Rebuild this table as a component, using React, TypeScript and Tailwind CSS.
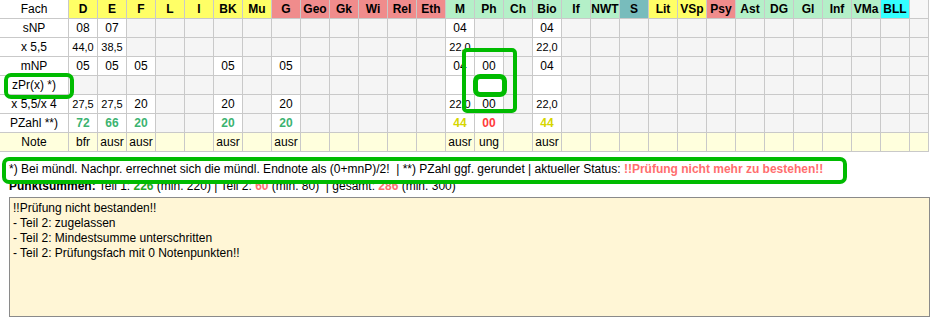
import React from "react";

type Tone = "y" | "r" | "g" | "t" | "c";

const cols: [string, Tone][] = [
  ["D", "y"], ["E", "y"], ["F", "y"], ["L", "y"], ["I", "y"], ["BK", "y"], ["Mu", "y"],
  ["G", "r"], ["Geo", "r"], ["Gk", "r"], ["Wi", "r"], ["Rel", "r"], ["Eth", "r"],
  ["M", "g"], ["Ph", "g"], ["Ch", "g"], ["Bio", "g"], ["If", "g"], ["NWT", "g"],
  ["S", "t"], ["Lit", "y"], ["VSp", "y"], ["Psy", "r"], ["Ast", "g"], ["DG", "g"],
  ["Gl", "g"], ["Inf", "g"], ["VMa", "g"], ["BLL", "c"],
];

const toneClass: Record<Tone, string> = {
  y: "bg-[#ffff66]",
  r: "bg-[#f08c8c]",
  g: "bg-[#b4f0c8]",
  t: "bg-[#78bcbc]",
  c: "bg-[#33ffff]",
};

type Cell = { v: string; white?: boolean; cls?: string };

const idx = (n: string) => cols.findIndex((c) => c[0] === n);

function makeRow(vals: Record<string, Cell>): (Cell | null)[] {
  const arr: (Cell | null)[] = cols.map(() => null);
  Object.entries(vals).forEach(([k, c]) => {
    arr[idx(k)] = c;
  });
  return arr;
}

const small = "text-[11px]";
const green = "font-bold text-[#3cb371]";
const yellow = "font-bold text-[#d6d600]";
const red = "font-bold text-[#ff3b3b]";

const rows: { label: string; note?: boolean; cells: (Cell | null)[] }[] = [
  {
    label: "sNP",
    cells: makeRow({
      D: { v: "08", white: true },
      E: { v: "07", white: true },
      M: { v: "04", white: true },
      Bio: { v: "04", white: true },
    }),
  },
  {
    label: "x 5,5",
    cells: makeRow({
      D: { v: "44,0", white: true, cls: small },
      E: { v: "38,5", white: true, cls: small },
      M: { v: "22,0", white: true, cls: small },
      Bio: { v: "22,0", white: true, cls: small },
    }),
  },
  {
    label: "mNP",
    cells: makeRow({
      D: { v: "05", white: true },
      E: { v: "05", white: true },
      F: { v: "05", white: true },
      BK: { v: "05", white: true },
      G: { v: "05", white: true },
      M: { v: "04", white: true },
      Ph: { v: "00", white: true },
      Bio: { v: "04", white: true },
    }),
  },
  {
    label: "zPr(x) *)",
    cells: makeRow({
      M: { v: "", white: true },
      Ph: { v: "", white: true },
      Bio: { v: "", white: true },
    }),
  },
  {
    label: "x 5,5/x 4",
    cells: makeRow({
      D: { v: "27,5", white: true, cls: small },
      E: { v: "27,5", white: true, cls: small },
      F: { v: "20", white: true },
      BK: { v: "20", white: true },
      G: { v: "20", white: true },
      M: { v: "22,0", white: true, cls: small },
      Ph: { v: "00", white: true },
      Bio: { v: "22,0", white: true, cls: small },
    }),
  },
  {
    label: "PZahl **)",
    cells: makeRow({
      D: { v: "72", white: true, cls: green },
      E: { v: "66", white: true, cls: green },
      F: { v: "20", white: true, cls: green },
      BK: { v: "20", white: true, cls: green },
      G: { v: "20", white: true, cls: green },
      M: { v: "44", white: true, cls: yellow },
      Ph: { v: "00", white: true, cls: red },
      Bio: { v: "44", white: true, cls: yellow },
    }),
  },
  {
    label: "Note",
    note: true,
    cells: makeRow({
      D: { v: "bfr" },
      E: { v: "ausr" },
      F: { v: "ausr" },
      BK: { v: "ausr" },
      G: { v: "ausr" },
      M: { v: "ausr" },
      Ph: { v: "ung" },
      Bio: { v: "ausr" },
    }),
  },
];

const cellBase = "h-[18px] flex items-center justify-center leading-none whitespace-nowrap";

export default function App() {
  return (
    <div className="relative w-[930px] h-[318px] overflow-hidden bg-white text-black font-['Liberation_Sans',Arial,sans-serif]">
      {/* table */}
      <div className="w-[929px] grid grid-cols-[68px_repeat(29,28px)_18px] gap-px bg-[#c9c9c9] border-b border-r border-[#c9c9c9] text-[12px]">
        <div className={`${cellBase} bg-white`}>Fach</div>
        {cols.map(([n, t]) => (
          <div key={n} className={`${cellBase} ${toneClass[t]} font-bold`}>
            {n}
          </div>
        ))}
        <div className={`${cellBase} bg-[#f7f7f7]`} />
        {rows.map((r) => (
          <React.Fragment key={r.label}>
            <div className={`${cellBase} ${r.note ? "bg-[#ffffdd]" : "bg-white"}`}>{r.label}</div>
            {r.cells.map((c, i) => (
              <div
                key={i}
                className={`${cellBase} ${
                  r.note ? "bg-[#ffffdd]" : c && c.white ? "bg-white" : "bg-[#f5f5f5]"
                } ${c?.cls ?? ""}`}
              >
                {c?.v}
              </div>
            ))}
            <div className={`${cellBase} ${r.note ? "bg-[#ffffdd]" : "bg-[#f5f5f5]"}`} />
          </React.Fragment>
        ))}
      </div>

      {/* footnote */}
      <div className="mt-[9px] pl-[9px] h-[17px] leading-[17px] text-[12px] whitespace-nowrap">
        *) Bei mündl. Nachpr. errechnet sich die mündl. Endnote als (0+mnP)/2!&nbsp; | **) PZahl ggf. gerundet | aktueller Status:{" "}
        <span className="font-bold text-[#ff6e6e]">!!Prüfung nicht mehr zu bestehen!!</span>
      </div>

      {/* sums */}
      <div className="pl-[9px] h-[17px] leading-[17px] text-[12px] whitespace-nowrap">
        <span className="font-bold">Punktsummen:</span> Teil 1: <span className="font-bold text-[#22a622]">226</span> (min. 220) | Teil 2:{" "}
        <span className="font-bold text-[#ff7070]">60</span> (min. 80)&nbsp; | gesamt: <span className="font-bold text-[#ff7070]">286</span> (min. 300)
      </div>

      {/* message box */}
      <div className="mt-[2px] ml-[9px] w-[921px] h-[120px] border border-[#8a8a8a] bg-[#fff6d6] px-[3px] pt-[3px] text-[12px] leading-[15px]">
        <div>!!Prüfung nicht bestanden!!</div>
        <div>- Teil 2: zugelassen</div>
        <div>- Teil 2: Mindestsumme unterschritten</div>
        <div>- Teil 2: Prüfungsfach mit 0 Notenpunkten!!</div>
      </div>

      {/* annotation overlays */}
      <div className="absolute left-[4px] top-[73px] w-[70px] h-[26px] border-4 border-[#00bb00] rounded-[7px]" />
      <div className="absolute left-[462px] top-[48px] w-[55px] h-[65px] border-4 border-[#00bb00] rounded-[5px]" />
      <div className="absolute left-[473px] top-[74px] w-[34px] h-[23px] border-[5px] border-[#00bb00] rounded-[7px]" />
      <div className="absolute left-[2px] top-[157px] w-[845px] h-[27px] border-4 border-[#00bb00] rounded-[7px]" />
    </div>
  );
}
